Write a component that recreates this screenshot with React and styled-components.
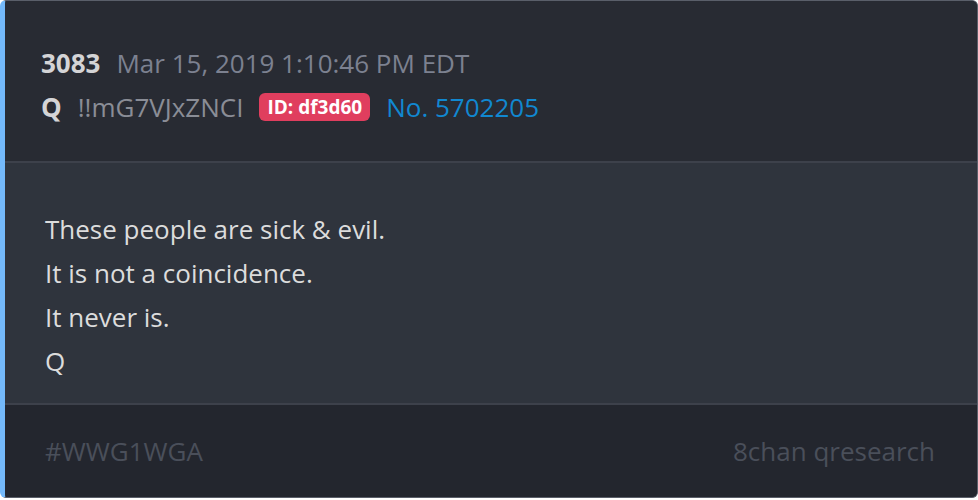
import React from "react";
import styled, { createGlobalStyle } from "styled-components";

const COLORS = {
  page: "#ffffff",
  header: "#282b33",
  body: "#2f343d",
  footer: "#23262e",
  divider: "#3d414b",
  edge: "#5a5f6a",
  accent: "#74b9fa",
  strong: "#d4d4d6",
  muted: "#7c8190",
  trip: "#8a8d96",
  text: "#dcdcdc",
  faint: "#4a4f5a",
  badge: "#e03e5e",
  link: "#1188d1",
};

const GlobalStyle = createGlobalStyle`
  html, body {
    margin: 0;
    padding: 0;
    background: ${COLORS.page};
  }
  body {
    font-family: "Open Sans", "Noto Sans", sans-serif;
  }
`;

const Card = styled.article`
  width: 978px;
  height: 498px;
  box-sizing: border-box;
  display: flex;
  flex-direction: column;
  overflow: hidden;
  border: 1px solid ${COLORS.edge};
  border-left: 5px solid ${COLORS.accent};
  border-radius: 6px;
  background: ${COLORS.body};
`;

const Header = styled.header`
  height: 162px;
  box-sizing: border-box;
  padding: 40px 0 0 36px;
  background: ${COLORS.header};
  border-bottom: 2px solid ${COLORS.divider};
  display: flex;
  flex-direction: column;
`;

const MetaRow = styled.div`
  display: flex;
  align-items: center;
  gap: 16px;
  height: 44px;
  font-size: 26px;
`;

const Num = styled.span`
  font-weight: 700;
  color: ${COLORS.strong};
`;

const Muted = styled.span`
  color: ${(p) => (p.$trip ? COLORS.trip : COLORS.muted)};
`;

const Badge = styled.span`
  background: ${COLORS.badge};
  color: #fff;
  font-weight: 700;
  font-size: 19px;
  line-height: 28px;
  padding: 0 8px;
  border-radius: 6px;
`;

const PostLink = styled.a`
  color: ${COLORS.link};
  text-decoration: none;
`;

const Body = styled.section`
  flex: 1;
  box-sizing: border-box;
  padding: 44px 0 0 40px;
  background: ${COLORS.body};
  border-bottom: 2px solid ${COLORS.divider};
`;

const Line = styled.p`
  margin: 0;
  height: 44px;
  line-height: 44px;
  font-size: 26px;
  color: ${COLORS.text};
`;

const Footer = styled.footer`
  height: 92px;
  box-sizing: border-box;
  padding: 0 42px 0 40px;
  background: ${COLORS.footer};
  display: flex;
  align-items: center;
  justify-content: space-between;
  font-size: 26px;
  color: ${COLORS.faint};
`;

const lines = [
  "These people are sick & evil.",
  "It is not a coincidence.",
  "It never is.",
  "Q",
];

export default function App() {
  return (
    <>
      <GlobalStyle />
      <Card>
        <Header>
          <MetaRow>
            <Num>3083</Num>
            <Muted>Mar 15, 2019 1:10:46 PM EDT</Muted>
          </MetaRow>
          <MetaRow>
            <Num>Q</Num>
            <Muted $trip>!!mG7VJxZNCI</Muted>
            <Badge>ID: df3d60</Badge>
            <PostLink href="#">No. 5702205</PostLink>
          </MetaRow>
        </Header>
        <Body>
          {lines.map((l) => (
            <Line key={l}>{l}</Line>
          ))}
        </Body>
        <Footer>
          <span>#WWG1WGA</span>
          <span>8chan qresearch</span>
        </Footer>
      </Card>
    </>
  );
}
